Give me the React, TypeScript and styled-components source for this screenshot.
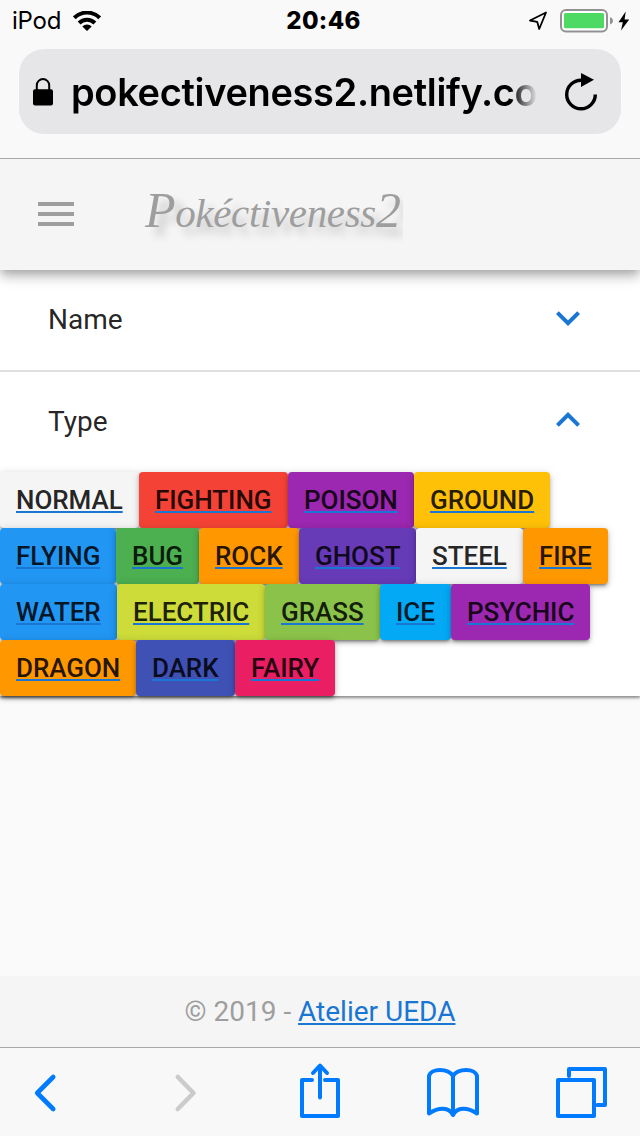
import React from "react";
import styled, { createGlobalStyle } from "styled-components";

const Global = createGlobalStyle`
  *, *::before, *::after { box-sizing: border-box; }
  body { margin: 0; background: #fafafa; }
  svg { display: block; flex: none; }
`;

const Screen = styled.div`
  width: 640px;
  height: 1136px;
  display: flex;
  flex-direction: column;
  overflow: hidden;
  background: #fafafa;
  font-family: Roboto, sans-serif;
`;

const BrowserTop = styled.header`
  height: 159px;
  flex: none;
  background: #f9f9f9;
  border-bottom: 1px solid #a9a9a9;
  font-family: Inter, sans-serif;
  color: #000;
`;

const StatusBar = styled.div`
  height: 49px;
  display: grid;
  grid-template-columns: 1fr auto 1fr;
  padding: 0 10px 8px 12px;
  align-items: center;
`;

const StatusGroup = styled.div<{ $end?: boolean }>`
  display: flex;
  align-items: center;
  justify-content: ${(p) => (p.$end ? "flex-end" : "flex-start")};
`;

const Carrier = styled.span`
  width: 61px;
  font-size: 24px;
  line-height: 40px;
  letter-spacing: -0.2px;
  white-space: nowrap;
`;

const Clock = styled.span`
  font-size: 24px;
  line-height: 40px;
  font-weight: 800;
  letter-spacing: 0.3px;
  margin-left: 5px;
`;

const AddressBar = styled.div`
  height: 85px;
  margin: 0 19px;
  padding: 0 22px 0 13px;
  display: flex;
  align-items: center;
  border-radius: 25px;
  background: #e6e6e8;
`;

const Address = styled.span`
  width: 466px;
  margin-left: 17px;
  margin-right: auto;
  font-size: 38px;
  line-height: 54px;
  font-weight: 600;
  letter-spacing: -0.35px;
  white-space: nowrap;
  mask-image: linear-gradient(to right, #000 440px, transparent 466px);
`;

const AppBar = styled.div`
  position: relative;
  height: 111px;
  flex: none;
  display: flex;
  align-items: center;
  padding: 0 0 2px 38px;
  background: #f5f5f5;
  box-shadow: 0 4px 8px -2px rgba(0, 0, 0, 0.2), 0 8px 10px rgba(0, 0, 0, 0.14),
    0 2px 20px rgba(0, 0, 0, 0.12);
  clip-path: inset(0 0 -30px 0);
`;

const Brand = styled.h1`
  width: 262px;
  margin: 0 0 2px 67px;
  padding: 0 4px;
  font: italic 400 41px / 76px "Liberation Serif", serif;
  letter-spacing: -0.35px;
  color: #9e9e9e;
  text-shadow: 8px 8px 8px rgba(0, 0, 0, 0.2);
  white-space: nowrap;
  clip-path: inset(0);
`;

const BrandCapital = styled.span`
  font-size: 50px;
  line-height: 1;
`;

const Panels = styled.main`
  height: 426px;
  flex: none;
  background: #fff;
  box-shadow: 0 2px 2px rgba(0, 0, 0, 0.3), 0 1px 5px rgba(0, 0, 0, 0.25);
`;

const PanelHeader = styled.div<{ $divided?: boolean }>`
  height: ${(p) => (p.$divided ? 102 : 100)}px;
  display: flex;
  align-items: center;
  justify-content: space-between;
  padding: 0 60px 0 48px;
  border-bottom: ${(p) => (p.$divided ? "2px solid #e0e0e0" : "none")};
  color: rgba(0, 0, 0, 0.87);
  font-size: 28px;
  line-height: 42px;
`;

const TypeRow = styled.div`
  height: 56px;
  display: flex;
`;

const TypeButton = styled.a<{ $bg: string; $w: number }>`
  width: ${(p) => p.$w}px;
  height: 56px;
  flex: none;
  padding-left: 16px;
  border-radius: 4px;
  background: ${(p) => p.$bg};
  color: rgba(0, 0, 0, 0.87);
  font-size: 26px;
  font-weight: 500;
  line-height: 56px;
  letter-spacing: -0.04px;
  white-space: nowrap;
  text-decoration: underline #1976d2 2px;
  text-decoration-skip-ink: none;
  text-underline-offset: 2px;
  box-shadow: 0 3px 3px -2px rgba(0, 0, 0, 0.4), 0 3px 4px rgba(0, 0, 0, 0.2),
    0 1px 8px rgba(0, 0, 0, 0.15);
`;

const Footer = styled.footer`
  height: 71px;
  flex: none;
  margin-top: auto;
  background: #f5f5f5;
  color: #9e9e9e;
  text-align: center;
  font-size: 28px;
  line-height: 71px;
`;

const FooterLink = styled.a`
  color: #1976d2;
  text-decoration: underline 2px;
  text-decoration-skip-ink: none;
  text-underline-offset: 2px;
`;

const BottomBar = styled.nav`
  height: 89px;
  flex: none;
  display: grid;
  grid-template-columns: 139px 127px 127px 130px 54px;
  padding: 14px 31px 0 32px;
  background: #f8f8f8;
  border-top: 1px solid #a9a9a9;
`;

type PokeType = [name: string, width: number, color: string];

const rows: PokeType[][] = [
  [["NORMAL", 139, "#f5f5f5"], ["FIGHTING", 149, "#f44336"], ["POISON", 126, "#9c27b0"], ["GROUND", 136, "#ffc107"]],
  [["FLYING", 116, "#2196f3"], ["BUG", 83, "#4caf50"], ["ROCK", 100, "#ff9800"], ["GHOST", 117, "#673ab7"], ["STEEL", 107, "#f5f5f5"], ["FIRE", 85, "#ff9800"]],
  [["WATER", 117, "#2196f3"], ["ELECTRIC", 148, "#cddc39"], ["GRASS", 115, "#8bc34a"], ["ICE", 71, "#03a9f4"], ["PSYCHIC", 139, "#9c27b0"]],
  [["DRAGON", 136, "#ff9800"], ["DARK", 99, "#3f51b5"], ["FAIRY", 100, "#e91e63"]],
];

const WifiIcon = () => (
  <svg width="28" height="20" viewBox="0 0 28 20">
    <g fill="none" stroke="#000" strokeWidth="4">
      <path d="M1.3 6.8a18 18 0 0 1 25.4 0" />
      <path d="M6.1 12a11.2 11.2 0 0 1 15.8 0" />
    </g>
    <path d="M9.3 15.4a6.7 6.7 0 0 1 9.4 0L14 20z" />
  </svg>
);

const LocationIcon = () => (
  <svg width="20" height="20" viewBox="0 0 20 20" fill="none" stroke="#000" strokeWidth="1.8" strokeLinejoin="round">
    <path d="M18 1.5 2 9.5 9.2 10.8 11.2 18z" />
  </svg>
);

const BatteryIcon = () => (
  <svg width="54" height="24" viewBox="0 0 54 24">
    <rect x="1" y="1" width="46" height="21.5" rx="5" fill="#fff" stroke="#929294" strokeWidth="2" />
    <rect x="4" y="4" width="40" height="15.2" rx="1.5" fill="#4cd964" />
    <path d="M50 8.2q3 1 3 3.6t-3 3.6z" fill="#929294" />
  </svg>
);

const BoltIcon = () => (
  <svg width="12" height="20" viewBox="0 0 12 20">
    <path d="M7.7.6.5 11.2h4.3L3 19.4l8.2-11H6.6z" />
  </svg>
);

const LockIcon = () => (
  <svg width="22" height="28" viewBox="0 0 22 28">
    <path d="M4.8 13V7.3a6.2 6.2 0 0 1 12.4 0V13" fill="none" stroke="#000" strokeWidth="2" />
    <rect x="1" y="11.2" width="20" height="16.2" rx="2" />
  </svg>
);

const ReloadIcon = () => (
  <svg width="36" height="40" viewBox="0 0 36 40">
    <path d="M32.3 22.5A14.3 14.3 0 1 1 18 8.2" fill="none" stroke="#000" strokeWidth="3.4" />
    <path d="M18 1 31 7.7 18 15z" />
  </svg>
);

const MenuIcon = () => (
  <svg width="36" height="24" viewBox="0 0 36 24" fill="#9e9e9e">
    <path d="M0 0h36v4H0zM0 10h36v4H0zM0 20h36v4H0z" />
  </svg>
);

const Chevron = ({ up }: { up?: boolean }) => (
  <svg width="24" height="20" viewBox="0 0 24 20" fill="none" stroke="#1976d2" strokeWidth="4">
    <path d={up ? "M1.4 13.4 12 2.8l10.6 10.6" : "M1.4 2.6 12 13.2 22.6 2.6"} />
  </svg>
);

const NavArrow = ({ forward }: { forward?: boolean }) => (
  <svg width="30" height="62" viewBox="0 0 30 62" fill="none" stroke={forward ? "#cbcbcb" : "#007aff"} strokeWidth="4.6" strokeLinecap="round" strokeLinejoin="round">
    <path d={forward ? "M6.8 15 22.5 31 6.8 47" : "M21.2 15 5.2 31l16 16"} />
  </svg>
);

const ShareIcon = () => (
  <svg width="44" height="60" viewBox="0 0 44 60" fill="none" stroke="#007aff" strokeWidth="4" strokeLinecap="round" strokeLinejoin="round">
    <path d="M14 18H4v36h36V18H27M22 35.5V4.5M15 11 22 3.5 29 11" />
  </svg>
);

const BookIcon = () => (
  <svg width="56" height="60" viewBox="0 0 56 60" fill="none" stroke="#007aff" strokeWidth="4" strokeLinecap="round" strokeLinejoin="round">
    <path d="M28 14v39C24 45 14 45 4 51.5V14C6 6 23 6 28 14C33 6 50 6 52 14V51.5C42 45 32 45 28 53" />
  </svg>
);

const TabsIcon = () => (
  <svg width="54" height="60" viewBox="0 0 54 60" fill="none" stroke="#007aff" strokeWidth="4" strokeLinecap="round" strokeLinejoin="round">
    <path d="M3 18h36v36H3zM14 14V7h36v36h-7.5" />
  </svg>
);

export default function App() {
  return (
    <Screen>
      <Global />
      <BrowserTop>
        <StatusBar>
          <StatusGroup>
            <Carrier>iPod</Carrier>
            <WifiIcon />
          </StatusGroup>
          <Clock>20:46</Clock>
          <StatusGroup $end>
            <LocationIcon />
            <svg width="12" height="1" />
            <BatteryIcon />
            <svg width="4" height="1" />
            <BoltIcon />
          </StatusGroup>
        </StatusBar>
        <AddressBar>
          <LockIcon />
          <Address>pokectiveness2.netlify.co</Address>
          <ReloadIcon />
        </AddressBar>
      </BrowserTop>
      <AppBar>
        <MenuIcon />
        <Brand>
          <BrandCapital>P</BrandCapital>okéctiveness<BrandCapital>2</BrandCapital>
        </Brand>
      </AppBar>
      <Panels>
        <PanelHeader $divided>
          Name
          <Chevron />
        </PanelHeader>
        <PanelHeader>
          Type
          <Chevron up />
        </PanelHeader>
        {rows.map((row, i) => (
          <TypeRow key={i}>
            {row.map(([name, width, color]) => (
              <TypeButton key={name} $w={width} $bg={color}>
                {name}
              </TypeButton>
            ))}
          </TypeRow>
        ))}
      </Panels>
      <Footer>
        © 2019 - <FooterLink>Atelier UEDA</FooterLink>
      </Footer>
      <BottomBar>
        <NavArrow />
        <NavArrow forward />
        <ShareIcon />
        <BookIcon />
        <TabsIcon />
      </BottomBar>
    </Screen>
  );
}
